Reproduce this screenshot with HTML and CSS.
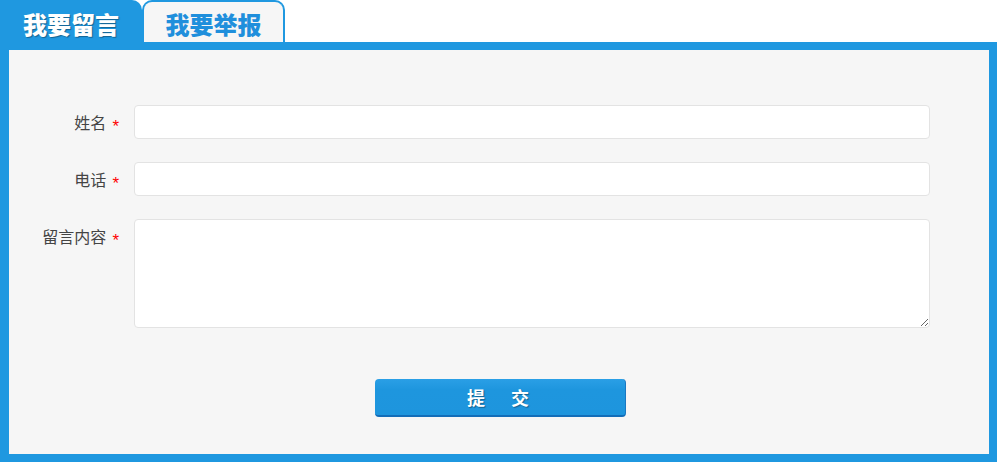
FILE: index.html
```html
<!DOCTYPE html>
<html lang="zh">
<head>
<meta charset="utf-8">
<link rel="stylesheet" href="styles.css">
</head>
<body>
<div class="wrap">
  <div class="tabs">
    <div class="tab active">我要留言</div>
    <div class="tab">我要举报</div>
  </div>
  <div class="panel">
    <form class="form">
      <div class="row">
        <label class="label">姓名<span class="req">*</span></label>
        <input class="field" type="text">
      </div>
      <div class="row">
        <label class="label">电话<span class="req">*</span></label>
        <input class="field" type="text">
      </div>
      <div class="row">
        <label class="label">留言内容<span class="req">*</span></label>
        <textarea class="field area"></textarea>
      </div>
      <div class="actions">
        <button type="button" class="submit">提　交</button>
      </div>
    </form>
  </div>
</div>
</body>
</html>
```

FILE: styles.css
```css
* { box-sizing: border-box; }
html, body { margin: 0; padding: 0; background: #fff; }
body { font-family: "Noto Sans CJK SC", "Liberation Sans", sans-serif; }
.wrap { width: 997px; height: 462px; display: flex; flex-direction: column; }
.tabs { display: flex; height: 42px; }
.tab {
  width: 143px;
  height: 42px;
  border: 2px solid #1f98e0;
  border-bottom: none;
  border-radius: 10px 10px 0 0;
  background: #f6f6f6;
  color: #1f8fdc;
  font-size: 24px;
  font-weight: 900;
  display: flex;
  align-items: center;
  justify-content: center;
  padding-top: 2px;
}
.tab.active {
  width: 142px;
  background: #1f98e0;
  color: #fff;
  border-radius: 0 10px 0 0;
  border: none;
  padding-top: 4px;
  text-shadow: 1px 1px 1px rgba(0,0,0,0.35);
}
.panel {
  flex: 1;
  background: #f6f6f6;
  border: 8px solid #1f98e0;
  border-left-width: 9px;
  padding: 55px 58px 0 0;
}
.form { display: flex; flex-direction: column; gap: 23px; }
.row { display: flex; align-items: flex-start; }
.label {
  width: 125px;
  padding-right: 15px;
  text-align: right;
  font-size: 16px;
  color: #444;
  line-height: 34px;
  height: 34px;
  white-space: nowrap;
}
.req { color: #f00; margin-left: 6px; font-family: "Liberation Sans", sans-serif; font-size: 17px; position: relative; top: 3px; }
.field {
  width: 796px;
  height: 34px;
  border: 1px solid #e3e3e3;
  border-radius: 4px;
  background: #fff;
  outline: none;
  font: inherit;
}
.area { height: 109px; resize: vertical; }
.actions { display: flex; justify-content: flex-start; padding-left: 366px; margin-top: 28px; }
.submit {
  width: 251px;
  height: 38px;
  border: none;
  border-radius: 4px;
  background: linear-gradient(#2a9fe6, #1e96de 30%, #1e95dd);
  border-bottom: 2px solid #136db8;
  border-right: 1px solid #1a78c2;
  color: #fff;
  font-family: "Noto Sans CJK SC", sans-serif;
  font-size: 18px;
  font-weight: 700;
  letter-spacing: 4px;
  text-shadow: 1px 1px 1px rgba(0,0,0,0.35);
  padding: 0;
}
```
